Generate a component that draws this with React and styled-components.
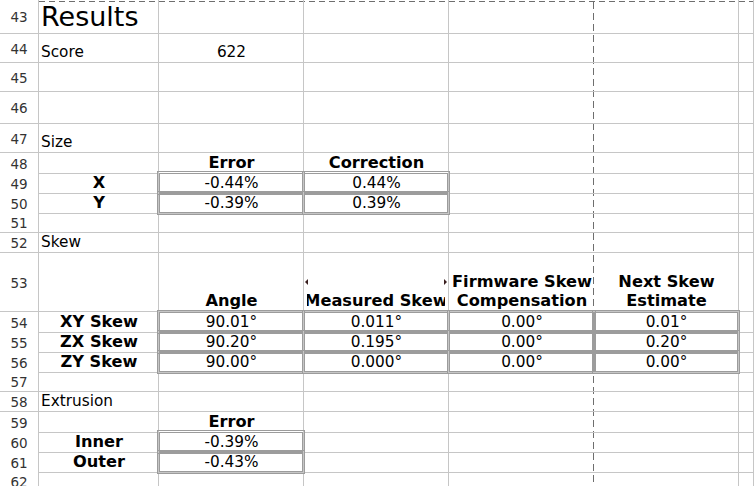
import React from "react";
import styled, { createGlobalStyle, css } from "styled-components";

const GlobalStyle = createGlobalStyle`
  html, body {
    margin: 0;
    padding: 0;
    background: #fff;
    overflow: hidden;
  }
  body {
    font-family: "DejaVu Sans", "Liberation Sans", sans-serif;
    color: #000;
  }
`;

const GRID = "#c6c6c6";
const BREAK = "#6e6e6e";
const COLS = "39px 120px 145px 145px 145px 145px 1fr";

// one entry per column A..F, null = empty cell
const rows = [
  { n: 43, h: 34, cells: [{ text: "Results", title: true }] },
  { n: 44, h: 29, cells: [{ text: "Score" }, { text: "622", center: true }] },
  { n: 45, h: 29, cells: [] },
  { n: 46, h: 32, cells: [] },
  { n: 47, h: 29, cells: [{ text: "Size" }] },
  {
    n: 48,
    h: 20,
    cells: [null, { text: "Error", bold: true, center: true }, { text: "Correction", bold: true, center: true }],
  },
  {
    n: 49,
    h: 20,
    cells: [
      { text: "X", bold: true, center: true },
      { text: "-0.44%", center: true, boxed: true },
      { text: "0.44%", center: true, boxed: true },
    ],
  },
  {
    n: 50,
    h: 20,
    cells: [
      { text: "Y", bold: true, center: true },
      { text: "-0.39%", center: true, boxed: true },
      { text: "0.39%", center: true, boxed: true },
    ],
  },
  { n: 51, h: 20, cells: [] },
  { n: 52, h: 20, cells: [{ text: "Skew" }] },
  {
    n: 53,
    h: 59,
    cells: [
      null,
      { text: "Angle", bold: true, center: true },
      { text: "Measured Skew", bold: true, center: true, clip: true },
      { text: "Firmware Skew\nCompensation", bold: true, center: true },
      { text: "Next Skew\nEstimate", bold: true, center: true },
    ],
  },
  {
    n: 54,
    h: 20,
    cells: [
      { text: "XY Skew", bold: true, center: true },
      { text: "90.01°", center: true, boxed: true },
      { text: "0.011°", center: true, boxed: true },
      { text: "0.00°", center: true, boxed: true },
      { text: "0.01°", center: true, boxed: true },
    ],
  },
  {
    n: 55,
    h: 20,
    cells: [
      { text: "ZX Skew", bold: true, center: true },
      { text: "90.20°", center: true, boxed: true },
      { text: "0.195°", center: true, boxed: true },
      { text: "0.00°", center: true, boxed: true },
      { text: "0.20°", center: true, boxed: true },
    ],
  },
  {
    n: 56,
    h: 20,
    cells: [
      { text: "ZY Skew", bold: true, center: true },
      { text: "90.00°", center: true, boxed: true },
      { text: "0.000°", center: true, boxed: true },
      { text: "0.00°", center: true, boxed: true },
      { text: "0.00°", center: true, boxed: true },
    ],
  },
  { n: 57, h: 20, cells: [] },
  { n: 58, h: 20, cells: [{ text: "Extrusion" }] },
  { n: 59, h: 20, cells: [null, { text: "Error", bold: true, center: true }] },
  {
    n: 60,
    h: 20,
    cells: [{ text: "Inner", bold: true, center: true }, { text: "-0.39%", center: true, boxed: true }],
  },
  {
    n: 61,
    h: 20,
    cells: [{ text: "Outer", bold: true, center: true }, { text: "-0.43%", center: true, boxed: true }],
  },
  { n: 62, h: 20, cells: [] },
];

// column D (index 3) sits on the page break
const PAGE_BREAK_COL = 3;

export default function App() {
  return (
    <>
      <GlobalStyle />
      <Sheet>
        {rows.map((row) => (
          <Row key={row.n} $h={row.h}>
            <RowHead>{row.n}</RowHead>
            {[0, 1, 2, 3, 4, 5].map((i) => {
              const c = row.cells[i];
              return (
                <Cell
                  key={i}
                  $center={c?.center}
                  $bold={c?.bold}
                  $boxed={c?.boxed}
                  $title={c?.title}
                  $noRight={i === PAGE_BREAK_COL}
                  $clip={c?.clip}
                >
                  {c && c.clip ? (
                    <>
                      <ArrowLeft />
                      <Clip>{c.text}</Clip>
                      <ArrowRight />
                    </>
                  ) : (
                    c && c.text
                  )}
                </Cell>
              );
            })}
          </Row>
        ))}
      </Sheet>
    </>
  );
}

// page-break dashes drawn as the sheet's background: one across the top, one down after column D
const Sheet = styled.div`
  width: 754px;
  height: 486px;
  overflow: hidden;
  background-image: repeating-linear-gradient(to right, ${BREAK} 0 6px, transparent 6px 10px),
    repeating-linear-gradient(to bottom, ${BREAK} 0 7px, transparent 7px 11px);
  background-size: 715px 1px, 1px 484px;
  background-position: 39px 1px, 593px 2px;
  background-repeat: no-repeat;
`;

const Row = styled.div`
  display: grid;
  grid-template-columns: ${COLS};
  height: ${(p) => p.$h}px;
`;

const RowHead = styled.div`
  display: flex;
  align-items: center;
  justify-content: center;
  padding-top: 1px;
  border-right: 1px solid ${GRID};
  border-bottom: 1px solid ${GRID};
  background: #fff;
  font-size: 13.5px;
  color: #333;
`;

const Cell = styled.div`
  display: flex;
  align-items: flex-end;
  justify-content: ${(p) => (p.$center ? "center" : "flex-start")};
  min-width: 0;
  padding: ${(p) => (p.$clip ? "0 3px 1px" : "0 1px 1px 2px")};
  border-right: ${(p) => (p.$noRight ? "none" : `1px solid ${GRID}`)};
  border-bottom: 1px solid ${GRID};
  font-size: ${(p) => (p.$title ? "27px" : p.$bold ? "16.2px" : "15.3px")};
  font-weight: ${(p) => (p.$bold ? 700 : 400)};
  text-align: center;
  white-space: pre;
  ${(p) =>
    (p.$boxed || p.$clip) &&
    css`
      position: relative;
    `}
  ${(p) =>
    p.$boxed &&
    css`
      &::after {
        content: "";
        position: absolute;
        top: -2px;
        left: -2px;
        right: -2px;
        bottom: -2px;
        border: 3px double #9c9c9c;
        pointer-events: none;
      }
    `}
`;

const Clip = styled.div`
  display: flex;
  justify-content: center;
  width: 100%;
  overflow: hidden;
  white-space: nowrap;
`;

const Arrow = styled.span`
  position: absolute;
  top: 50%;
  width: 0;
  height: 0;
  margin-top: -3px;
  border-top: 3px solid transparent;
  border-bottom: 3px solid transparent;
`;

const ArrowLeft = styled(Arrow)`
  left: 1px;
  border-right: 3px solid #3a1f1f;
`;

const ArrowRight = styled(Arrow)`
  right: 1px;
  border-left: 3px solid #3a1f1f;
`;
